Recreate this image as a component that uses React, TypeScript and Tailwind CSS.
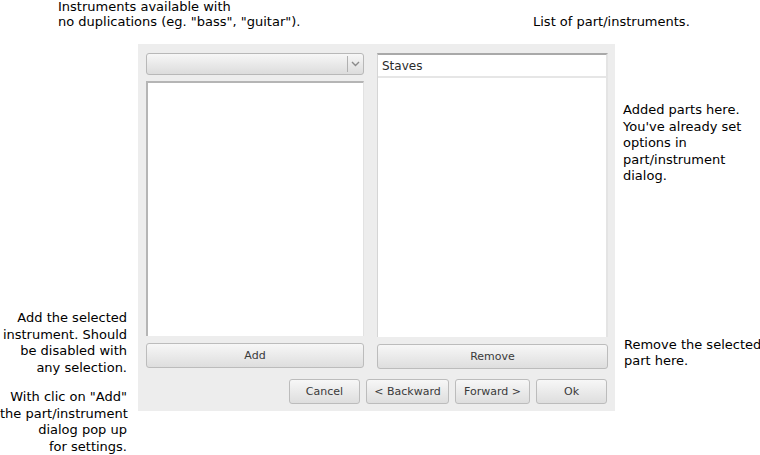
import React from 'react';

const btn =
  'flex items-center justify-center h-[25px] rounded-[3px] border border-[#bcbcbc] bg-gradient-to-b from-[#f7f7f7] to-[#dedede] text-[11px] text-[#3a3a3a] whitespace-nowrap';

const App: React.FC = () => {
  return (
    <div className="w-[760px] h-[455px] bg-white text-black text-[13px] leading-[16px] font-['DejaVu_Sans',sans-serif] overflow-hidden whitespace-nowrap">
      {/* Top notes */}
      <div className="flex items-end h-[44px] pb-[15px] leading-[14.5px]">
        <div className="pl-[58px] w-[533px]">
          <div>Instruments available with</div>
          <div>no duplications (eg. "bass", "guitar").</div>
        </div>
        <div>List of part/instruments.</div>
      </div>

      <div className="flex">
        {/* Left notes */}
        <div className="w-[138px] shrink-0 pr-[11px] pt-[266px] text-right leading-[16.7px]">
          <div>Add the selected</div>
          <div>instrument. Should</div>
          <div>be disabled with</div>
          <div>any selection.</div>
          <div className="mt-[12px]">With clic on "Add"</div>
          <div>the part/instrument</div>
          <div>dialog pop up</div>
          <div>for settings.</div>
        </div>

        {/* Dialog */}
        <div className="w-[477px] shrink-0 h-[367px] bg-[#ededed] pl-[8px] pr-[7px] pt-[9px] flex flex-col">
          <div className="flex gap-[13px]">
            <div className="w-[218px] flex flex-col">
              <div className="h-[22px] rounded-[3px] border border-[#b8b8b8] bg-gradient-to-b from-[#f7f7f7] to-[#dcdcdc] flex justify-end items-center">
                <div className="w-px h-[16px] bg-[#b0b0b0]" />
                <svg width="13" height="8" viewBox="0 0 13 8" className="mx-[1px]">
                  <path d="M3 2 L6.5 5.5 L10 2" fill="none" stroke="#8a8a8a" strokeWidth="1.4" />
                </svg>
              </div>
              <div className="mt-[6px] h-[255px] bg-white border-t-2 border-l-2 border-[#b5b5b5] border-r border-r-[#e2e2e2]" />
              <div className={`${btn} mt-[7px]`}>Add</div>
            </div>
            <div className="w-[231px] flex flex-col">
              <div className="h-[284px] bg-white border-t-2 border-t-[#a9a9a9] border-l border-l-[#d5d5d5] border-r-2 border-r-[#e4e4e4]">
                <div className="h-[23px] border-b-2 border-[#e6e6e6] flex items-center pl-[4px] text-[12px] text-[#2a2a2a]">
                  Staves
                </div>
              </div>
              <div className={`${btn} mt-[7px]`}>Remove</div>
            </div>
          </div>
          <div className="flex justify-end gap-[6px] mt-[10px] pr-[1px]">
            <div className={`${btn} w-[71px]`}>Cancel</div>
            <div className={`${btn} w-[83px]`}>&lt; Backward</div>
            <div className={`${btn} w-[75px]`}>Forward &gt;</div>
            <div className={`${btn} w-[71px]`}>Ok</div>
          </div>
        </div>

        {/* Right notes */}
        <div className="pl-[8px] flex flex-col">
          <div className="pt-[58px] leading-[16.6px]">
            <div>Added parts here.</div>
            <div>You've already set</div>
            <div>options in</div>
            <div>part/instrument</div>
            <div>dialog.</div>
          </div>
          <div className="mt-[152px] pl-[1px] leading-[16px]">
            <div>Remove the selected</div>
            <div>part here.</div>
          </div>
        </div>
      </div>
    </div>
  );
};

export default App;
